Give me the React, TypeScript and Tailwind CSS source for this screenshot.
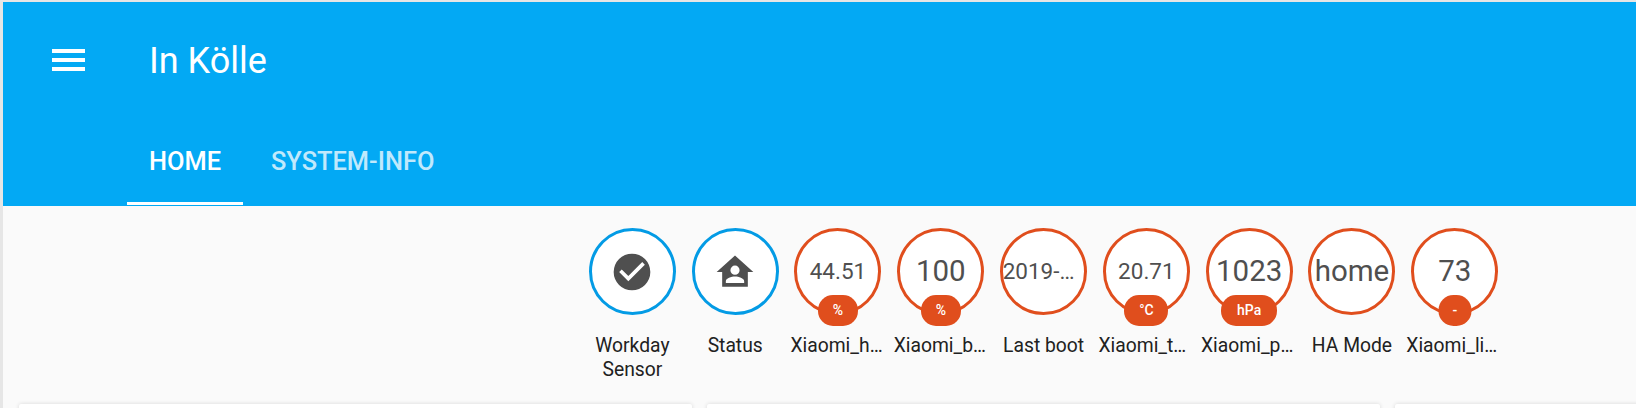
type Badge = {
  value?: string
  valueSize?: string
  unit?: string
  unitWidth?: string
  label: string[]
  labelOffset?: string
  icon?: 'check' | 'home'
}

const badges: Badge[] = [
  { icon: 'check', label: ['Workday', 'Sensor'] },
  { icon: 'home', label: ['Status'] },
  { value: '44.51', valueSize: 'text-[22.5px]', unit: '%', unitWidth: 'w-[40px]', label: ['Xiaomi_h…'], labelOffset: '-translate-x-[1.5px]' },
  { value: '100', valueSize: 'text-[29.5px]', unit: '%', unitWidth: 'w-[40px]', label: ['Xiaomi_b…'], labelOffset: '-translate-x-[1px]' },
  { value: '2019-…', valueSize: 'text-[22.5px] -translate-x-[5px]', label: ['Last boot'] },
  { value: '20.71', valueSize: 'text-[22.5px]', unit: '°C', unitWidth: 'w-[44px]', label: ['Xiaomi_t…'], labelOffset: '-translate-x-[4px]' },
  { value: '1023', valueSize: 'text-[29.5px]', unit: 'hPa', unitWidth: 'w-[56px]', label: ['Xiaomi_p…'], labelOffset: '-translate-x-[2px]' },
  { value: 'home', valueSize: 'text-[29.5px]', label: ['HA Mode'] },
  { value: '73', valueSize: 'text-[29.5px]', unit: '-', unitWidth: 'w-[33px]', label: ['Xiaomi_li…'], labelOffset: '-translate-x-[3px]' }
]

const BadgeIcon = ({ icon }: { icon: 'check' | 'home' }) =>
  icon === 'check' ? (
    <svg viewBox="0 0 24 24" className="size-[44px] fill-[#4f4f4f]">
      <path d="M12 2A10 10 0 0 0 2 12a10 10 0 0 0 10 10 10 10 0 0 0 10-10A10 10 0 0 0 12 2m-2 15-5-5 1.41-1.41L10 14.17l7.59-7.59L19 8z" />
    </svg>
  ) : (
    <svg viewBox="0 0 24 24" className="size-[44px] fill-[#4f4f4f]">
      <path d="M12 3 2 12h3v8h14v-8h3L12 3m0 5.5a2.5 2.5 0 1 1 0 5 2.5 2.5 0 0 1 0-5M7 18v-1c0-1.5 3-2.5 5-2.5s5 1 5 2.5v1H7z" />
    </svg>
  )

const StateBadge = ({ badge }: { badge: Badge }) => {
  const ringColor = badge.icon ? 'border-[#039be5]' : 'border-[#e04e1d]'

  return (
    <div className="flex w-[102.8px] shrink-0 flex-col items-center">
      <div
        className={`relative flex size-[87px] items-center justify-center rounded-full border-[3.5px] bg-white ${ringColor}`}
      >
        {badge.icon && <BadgeIcon icon={badge.icon} />}
        {badge.value && (
          <span className={`whitespace-nowrap leading-none text-[#4f4f4f] ${badge.valueSize}`}>{badge.value}</span>
        )}
        {badge.unit && (
          <span
            className={`absolute bottom-[-14px] left-1/2 flex h-[31px] -translate-x-1/2 items-center justify-center rounded-[15px] bg-[#e04e1d] text-[14px] font-medium text-white ${badge.unitWidth}`}
          >
            {badge.unit}
          </span>
        )}
      </div>
      <div className={`mt-[19px] text-center text-[19.3px] leading-[24px] text-[#212121] ${badge.labelOffset ?? ''}`}>
        {badge.label.map((line) => (
          <div key={line} className="whitespace-nowrap">
            {line}
          </div>
        ))}
      </div>
    </div>
  )
}

export default function App() {
  return (
    <div className="h-[408px] w-[1636px] overflow-hidden border-t-2 border-l-[3px] border-[#e6e6e6] bg-[#fafafa] font-['Roboto',sans-serif]">
      <header className="h-[204px] bg-[#03a9f4] text-white">
        <div className="flex h-[116px] items-center pl-[49px]">
          <svg viewBox="0 0 33 22" className="h-[22px] w-[33px] fill-white">
            <rect x="0" y="0" width="33" height="4" />
            <rect x="0" y="9" width="33" height="4" />
            <rect x="0" y="18" width="33" height="4" />
          </svg>
          <h1 className="ml-[64px] pt-[2px] text-[36px] leading-none font-normal">In Kölle</h1>
        </div>
        <nav className="flex h-[88px] pl-[124px] text-[25.4px] font-medium">
          <div className="flex h-[87px] w-[116px] items-center justify-center border-b-[3px] border-white pt-[3px]">
            HOME
          </div>
          <div className="ml-[28px] flex h-[87px] items-center pt-[3px] pb-[3px] text-white/75">SYSTEM-INFO</div>
        </nav>
      </header>
      <main>
        <div className="flex h-[198px] pt-[22px] pl-[578px]">
          {badges.map((badge) => (
            <StateBadge key={badge.label[0]} badge={badge} />
          ))}
        </div>
        <div className="flex gap-[15px] pl-[16px]">
          <div className="h-[8px] w-[673px] shrink-0 rounded-t-[2px] bg-white shadow-[0_0_4px_rgba(0,0,0,0.14)]" />
          <div className="h-[8px] w-[673px] shrink-0 rounded-t-[2px] bg-white shadow-[0_0_4px_rgba(0,0,0,0.14)]" />
          <div className="h-[8px] w-[300px] shrink-0 rounded-t-[2px] bg-white shadow-[0_0_4px_rgba(0,0,0,0.14)]" />
        </div>
      </main>
    </div>
  )
}
